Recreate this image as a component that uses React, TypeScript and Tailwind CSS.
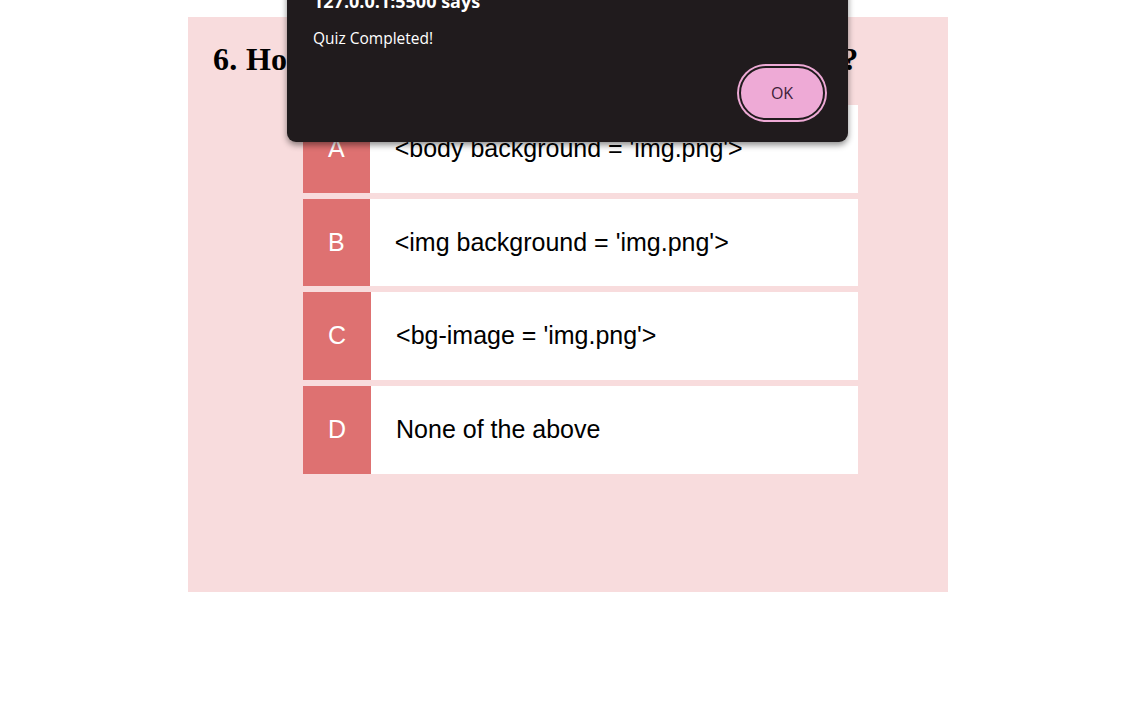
import React from "react";

const options = [
  { l: "A", t: "<body background = 'img.png'>" },
  { l: "B", t: "<img background = 'img.png'>" },
  { l: "C", t: "<bg-image = 'img.png'>" },
  { l: "D", t: "None of the above" },
];

export default function App() {
  return (
    <div className="relative w-[1142px] h-[713px] bg-white overflow-hidden">
      <div className="ml-[188px] mt-[17px] w-[760px] h-[575px] bg-[#f8dcdd] flex flex-col">
        <h1
          className="ml-[25px] mt-[24px] text-[32px] font-bold leading-[37px] text-black whitespace-nowrap tracking-[0.3px]"
          style={{ fontFamily: '"Liberation Serif", "Times New Roman", serif' }}
        >
          6. How to add a background image in HTML?
        </h1>
        <div
          className="ml-[115px] mt-[27px] w-[555px] flex flex-col gap-[6.07px]"
          style={{ fontFamily: '"Liberation Sans", Arial, sans-serif' }}
        >
          {options.map((o) => (
            <div key={o.l} className="flex h-[87.6px] bg-white">
              <div className="bg-[#de7171] text-white text-[25px] px-[25px] flex items-center justify-center">
                {o.l}
              </div>
              <div className="flex items-center pl-[25px] text-[25px] text-black">{o.t}</div>
            </div>
          ))}
        </div>
      </div>

      <div
        className="absolute left-[287px] top-[-26px] w-[561px] h-[168px] bg-[#201b1d] rounded-[9px] shadow-[0_3px_6px_rgba(0,0,0,0.45)] px-[26px] pt-[17px] flex flex-col"
        style={{ fontFamily: '"Open Sans", "Noto Sans", sans-serif' }}
      >
        <div className="text-white text-[18px] font-bold leading-[20px]">127.0.0.1:5500 says</div>
        <div className="text-white text-[15.5px] leading-[20px] mt-[17px]">Quiz Completed!</div>
        <div className="flex justify-end mt-[16px] mr-[-5px]">
          <div className="rounded-full bg-[#eeaad6] p-[2px]">
            <div className="rounded-full border-[2.5px] border-[#201b1d] bg-[#eeaad6] w-[86px] h-[54px] flex items-center justify-center text-[16px] text-[#3d1d38]">
              OK
            </div>
          </div>
        </div>
      </div>
    </div>
  );
}
